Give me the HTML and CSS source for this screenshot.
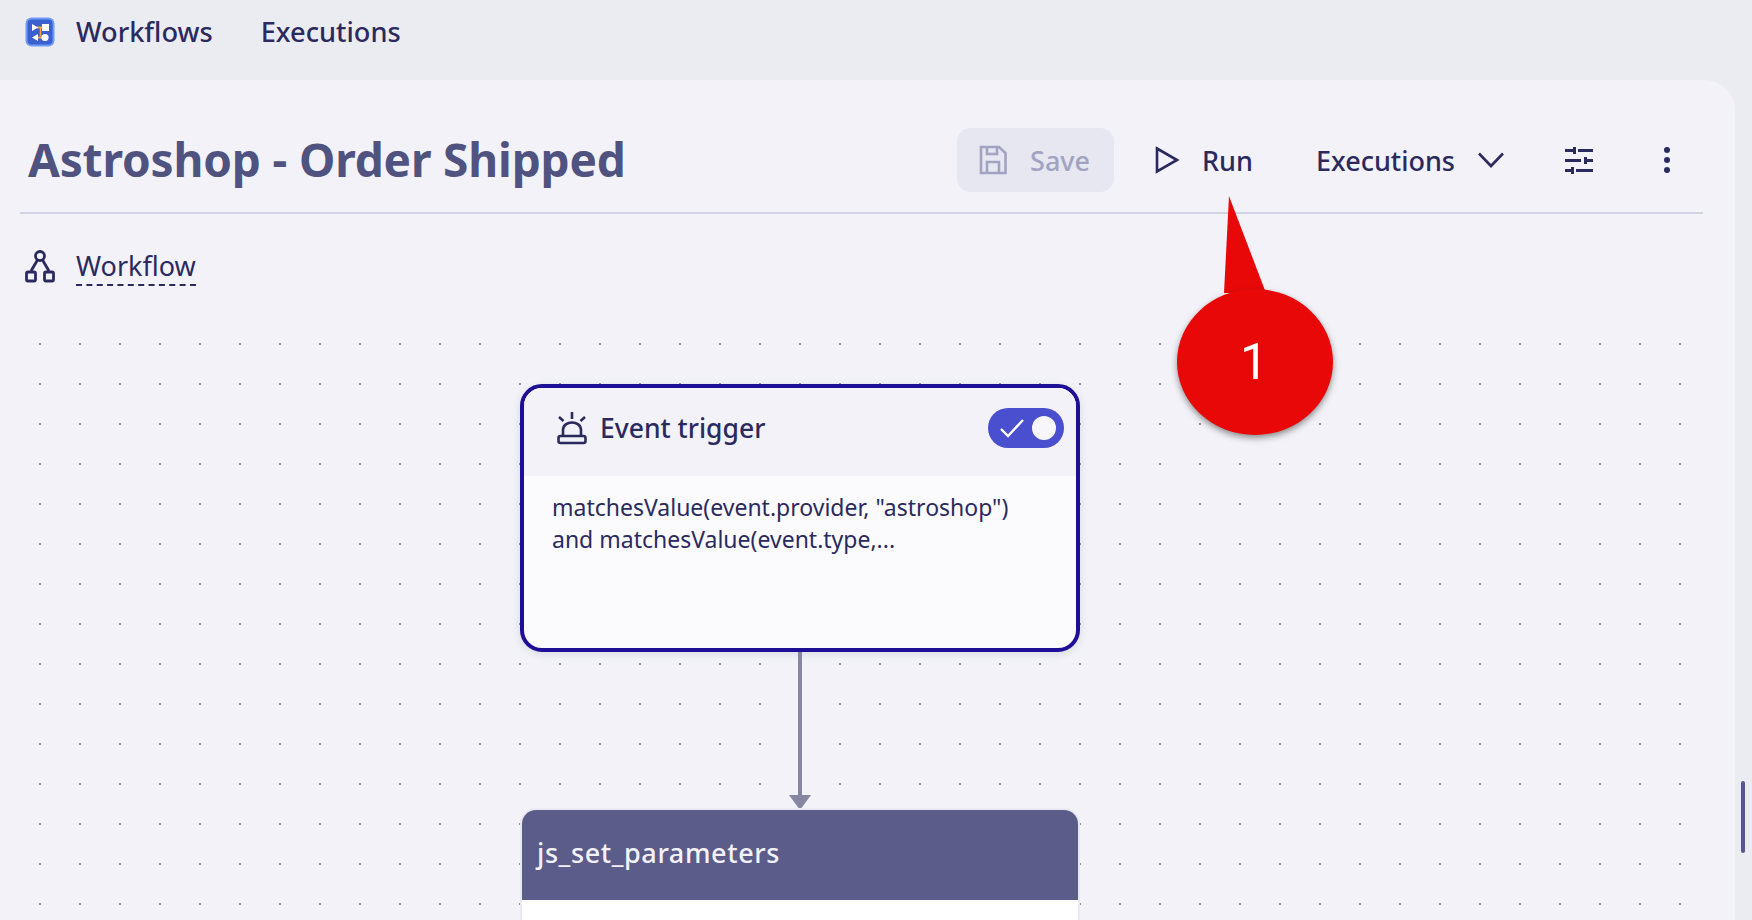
FILE: index.html
```html
<!DOCTYPE html>
<html>
<head>
	<meta charset="UTF-8">
	<title>Astroshop - Order Shipped</title>
	<link rel="stylesheet" href="styles.css">
</head>
<body>
	<nav class="topbar">
		<svg class="app-logo" viewBox="0 0 30 30">
			<rect x="0.5" y="0.5" width="29" height="29" rx="6" fill="#6f9cf5"/>
			<rect x="2.5" y="2.5" width="25" height="25" rx="4" fill="#3a5fd0"/>
			<path d="M12 10.5H20M11 20.5H19" stroke="#f0a83c" stroke-width="2"/>
			<path d="M15.5 11V19" stroke="#f0a83c" stroke-width="1.5"/>
			<path d="M7 7L13 10.5L7 14Z" fill="#fff"/>
			<rect x="17" y="7" width="7" height="7" fill="#fff"/>
			<path d="M13 17L7 20.5L13 24Z" fill="#fff"/>
			<circle cx="20" cy="20.5" r="3.6" fill="#fff"/>
		</svg>
		<a class="topbar-link">Workflows</a>
		<a class="topbar-link">Executions</a>
	</nav>

	<main class="panel">
		<header class="panel-head">
			<h1 class="title">Astroshop - Order Shipped</h1>
			<div class="actions">
				<button class="btn btn-save">
					<svg width="28" height="30" viewBox="0 0 28 30" fill="none" stroke="#a2a3c2" stroke-width="2.6">
						<path d="M2 2H20L26.500 8V28H2Z"/>
						<path d="M8 2V9H18V2M8 28V17H20V28"/>
					</svg>
					<span>Save</span>
				</button>
				<button class="btn btn-run">
					<svg width="25" height="28" viewBox="0 0 25 28" fill="none" stroke="#2b2a5f" stroke-width="2.6">
						<path d="M2 2.500L22 14L2 25.500Z"/>
					</svg>
					<span>Run</span>
				</button>
				<button class="btn btn-exec">
					<span>Executions</span>
					<svg width="26" height="16" viewBox="0 0 26 16" fill="none" stroke="#2b2a5f" stroke-width="2.6">
						<path d="M1 1.500L13 14L25 1.500"/>
					</svg>
				</button>
				<svg class="icon-sliders" width="30" height="27" viewBox="0 0 30 27" fill="#2b2a5f">
					<path d="M1 2H9V5H1ZM14 2H29V5H14ZM9 0H12V7H9Z"/>
					<path d="M1 12H17V15H1ZM22 12H29V15H22ZM20 10H23V17H20Z"/>
					<path d="M1 22H7V25H1ZM12 22H29V25H12ZM7 20H10V27H7Z"/>
				</svg>
				<svg class="icon-more" width="8" height="26" viewBox="0 0 8 26" fill="#2b2a5f">
					<circle cx="4" cy="3" r="3"/>
					<circle cx="4" cy="13" r="3"/>
					<circle cx="4" cy="23" r="3"/>
				</svg>
			</div>
		</header>

		<div class="section-row">
			<svg width="30" height="33" viewBox="0 0 30 33" fill="none" stroke="#2b2a5f" stroke-width="2.800">
				<circle cx="15" cy="6" r="4.500"/>
				<path d="M12.500 10L6 21M17.500 10L24 21"/>
				<rect x="1.500" y="22" width="9" height="9" rx="1.500"/>
				<rect x="19.500" y="22" width="9" height="9" rx="1.500"/>
			</svg>
			<span class="section-label">Workflow</span>
		</div>

		<section class="canvas">
			<div class="node node-trigger">
				<div class="node-head">
					<svg width="32" height="33" viewBox="0 0 32 33" fill="none" stroke="#2b2a5f" stroke-width="2.600">
						<path d="M16 0V7M3 5L7.500 9M29 5L24.500 9"/>
						<path d="M7 24V18C7 8 25 8 25 18V24"/>
						<rect x="2.500" y="24" width="27" height="7" rx="2"/>
					</svg>
					<span class="node-title">Event trigger</span>
					<div class="toggle">
						<svg width="24" height="20" viewBox="0 0 24 20" fill="none" stroke="#fff" stroke-width="2.400">
							<path d="M1 11L8 18L23 2"/>
						</svg>
						<i class="toggle-knob"></i>
					</div>
				</div>
				<div class="node-body">matchesValue(event.provider, "astroshop") and matchesValue(event.type,...</div>
			</div>

			<div class="edge"></div>
			<div class="edge-head"></div>

			<div class="node node-task">
				<div class="task-head">js_set_parameters</div>
				<div class="task-body"></div>
			</div>
		</section>
	</main>

	<div class="scroll-thumb"></div>

	<!-- red callout drawn on top of the screenshot -->
	<div class="callout">
		<svg width="170" height="250" viewBox="0 0 170 250">
			<path d="M58 0L53 97H95Z" fill="#e90808"/>
		</svg>
		<div class="callout-dot">1</div>
	</div>
</body>
</html>
```

FILE: styles.css
```css
*{
	box-sizing:border-box;
}

html,body{
	margin:0;
	height:920px;
	overflow:hidden;
}

body{
	background:#ebecf1;
	color:#2b2a5f;
	font-family:"Noto Sans","Liberation Sans",sans-serif;
	display:flex;
	flex-direction:column;
	position:relative;
}

/* top nav */
.topbar{
	height:80px;
	flex:none;
	display:flex;
	align-items:flex-start;
	padding:17px 0 0 25px;
}

.app-logo{
	width:30px;
	height:30px;
	margin-right:21px;
}

.topbar-link{
	font-size:27.200px;
	font-weight:500;
	line-height:30px;
	margin-right:48px;
}

/* main panel */
.panel{
	flex:1;
	width:1735px;
	background:#f2f2f8;
	border-radius:0 30px 0 0;
	display:flex;
	flex-direction:column;
	min-height:0;
}

.panel-head{
	margin:0 32px 0 20px;
	padding:48px 0 20px 8px;
	height:134px;
	flex:none;
	display:flex;
	align-items:center;
	justify-content:space-between;
	border-bottom:2px solid #d2d3e2;
}

.title{
	margin:-2px 0 0;
	font-size:46px;
	letter-spacing:-0.150px;
	line-height:64px;
	font-weight:700;
	color:#50527f;
}

.actions{
	display:flex;
	align-items:center;
	height:64px;
}

.btn{
	border:0;
	background:none;
	padding:0;
	font-family:inherit;
	font-size:27px;
	font-weight:500;
	color:#2b2a5f;
	display:flex;
	align-items:center;
	height:64px;
}

.btn-save{
	width:157px;
	background:#e6e7f0;
	border-radius:14px;
	color:#a2a3c2;
	padding-left:22px;
	gap:23px;
	margin-right:41px;
}

.btn-run{
	gap:22px;
	margin-right:63px;
}

.btn-exec{
	gap:23px;
	margin-right:60px;
}

.icon-more{
	margin:0 32px 0 69px;
}

.section-row{
	flex:none;
	height:129px;
	padding:36px 0 0 25px;
	display:flex;
	align-items:flex-start;
	gap:21px;
}

.section-label{
	font-size:27px;
	line-height:36px;
	height:38px;
	margin-top:-2px;
	border-bottom:2px dashed #2b2a5f;
}

/* dotted canvas, nodes sit on it freely */
.canvas{
	flex:1;
	position:relative;
	margin-left:39px;
	width:1643px;
	background-image:radial-gradient(circle at 1px 1px,#8e8e9c 1.100px,transparent 1.300px);
	background-size:40px 40px;
}

.node{
	position:absolute;
}

.node-trigger{
	left:481px;
	top:41px;
	width:560px;
	height:268px;
	border:4px solid #1f0f96;
	border-radius:22px;
	background:#fbfbfd;
	overflow:hidden;
	box-shadow:0 2px 8px rgba(60,60,110,0.12);
}

.node-head{
	height:88px;
	background:#f2f2f8;
	display:flex;
	align-items:center;
	padding:0 12px 8px 32px;
	position:relative;
}

.node-title{
	font-size:26.500px;
	font-weight:500;
	margin-left:12px;
}

.toggle{
	margin-left:auto;
	width:76px;
	height:40px;
	border-radius:20px;
	background:#4a4fcf;
	display:flex;
	align-items:center;
	padding-left:12px;
}

.toggle-knob{
	width:24px;
	height:24px;
	border-radius:50%;
	background:#f6f6fb;
	margin-left:8px;
}

.node-body{
	padding:15px 40px 0 28px;
	font-size:23px;
	line-height:32px;
}

.edge{
	position:absolute;
	left:759px;
	top:309px;
	width:4px;
	height:145px;
	background:#8586a2;
}

.edge-head{
	position:absolute;
	left:750px;
	top:452px;
	width:0;
	height:0;
	border-left:11px solid transparent;
	border-right:11px solid transparent;
	border-top:15px solid #8586a2;
}

.node-task{
	left:481px;
	top:465px;
	width:560px;
	height:140px;
	border:2px solid #e9e9f1;
	border-radius:16px;
	background:#fff;
	overflow:hidden;
}

.task-head{
	height:90px;
	background:#5b5c8a;
	color:#f2f2f8;
	font-size:27px;
	letter-spacing:0.600px;
	font-weight:500;
	line-height:85px;
	padding-left:15px;
}

.scroll-thumb{
	position:absolute;
	left:1741px;
	top:781px;
	width:4px;
	height:72px;
	border-radius:2px;
	background:#56578f;
}

.callout{
	position:absolute;
	left:1171px;
	top:196px;
	width:170px;
	height:250px;
}

.callout svg{
	display:block;
}

.callout-dot{
	position:absolute;
	left:6px;
	top:93px;
	width:156px;
	height:146px;
	border-radius:50%;
	background:#e90808;
	box-shadow:0 3px 6px rgba(40,40,40,0.5);
	color:#fff;
	font-family:Roboto,"Liberation Sans",sans-serif;
	font-size:50px;
	line-height:146px;
	text-align:center;
	padding-right:2px;
}
```
